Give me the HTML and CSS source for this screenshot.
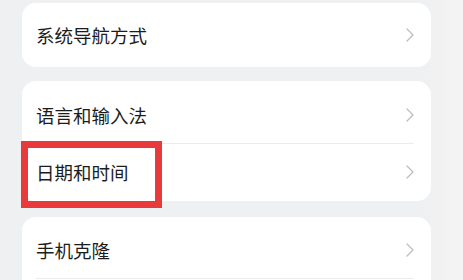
FILE: index.html
```html
<!DOCTYPE html>
<html lang="zh">
<head>
<meta charset="utf-8">
<link rel="stylesheet" href="styles.css">
</head>
<body>
<div class="page">
  <div class="list">
    <div class="card card-a">
      <div class="row"><span class="label">系统导航方式</span><svg class="chev" viewBox="0 0 8 14"><path d="M1 1 L7 7 L1 13"/></svg></div>
    </div>
    <div class="card card-b">
      <div class="row"><span class="label">语言和输入法</span><svg class="chev" viewBox="0 0 8 14"><path d="M1 1 L7 7 L1 13"/></svg></div>
      <div class="row divided"><span class="label">日期和时间</span><svg class="chev" viewBox="0 0 8 14"><path d="M1 1 L7 7 L1 13"/></svg></div>
    </div>
    <div class="card card-c">
      <div class="row"><span class="label">手机克隆</span><svg class="chev" viewBox="0 0 8 14"><path d="M1 1 L7 7 L1 13"/></svg></div>
      <div class="row divided"></div>
    </div>
  </div>
  <div class="strip"></div>
  <div class="highlight"></div>
</div>
</body>
</html>
```

FILE: styles.css
```css
html, body {
  margin: 0;
  padding: 0;
  background: #eff0f2;
}
.page {
  position: relative;
  display: flex;
  width: 463px;
  height: 280px;
  overflow: hidden;
  font-family: "Noto Sans CJK SC", "Noto Sans", sans-serif;
}
.list {
  width: 409px;
  padding: 3px 0 0 22px;
  display: flex;
  flex-direction: column;
}
.strip {
  flex: 1;
  background: linear-gradient(to right, #f1f1f1, #f4f4f4);
}
.card {
  background: #ffffff;
  border-radius: 14px;
  padding: 0 17px 0 14px;
}
.card-a {
  padding-top: 4px;
  padding-bottom: 4px;
}
.card-b {
  margin-top: 14px;
  padding-top: 6px;
  padding-bottom: 2px;
}
.card-c {
  margin-top: 16px;
  padding-top: 5px;
}
.row {
  height: 56px;
  display: flex;
  align-items: center;
  justify-content: space-between;
  box-sizing: border-box;
}
.row.divided {
  border-top: 1px solid #ececec;
  height: 56px;
}
.label {
  font-size: 18.5px;
  color: #1c1c1c;
  letter-spacing: 0;
}
.chev {
  width: 8px;
  height: 14px;
  margin-right: 0;
}
.chev path {
  fill: none;
  stroke: #bcbcbc;
  stroke-width: 1.2;
  stroke-linecap: round;
  stroke-linejoin: round;
}
.highlight {
  position: absolute;
  left: 21px;
  top: 141px;
  width: 141px;
  height: 67px;
  box-sizing: border-box;
  border: 7px solid #e83a3b;
}
```
